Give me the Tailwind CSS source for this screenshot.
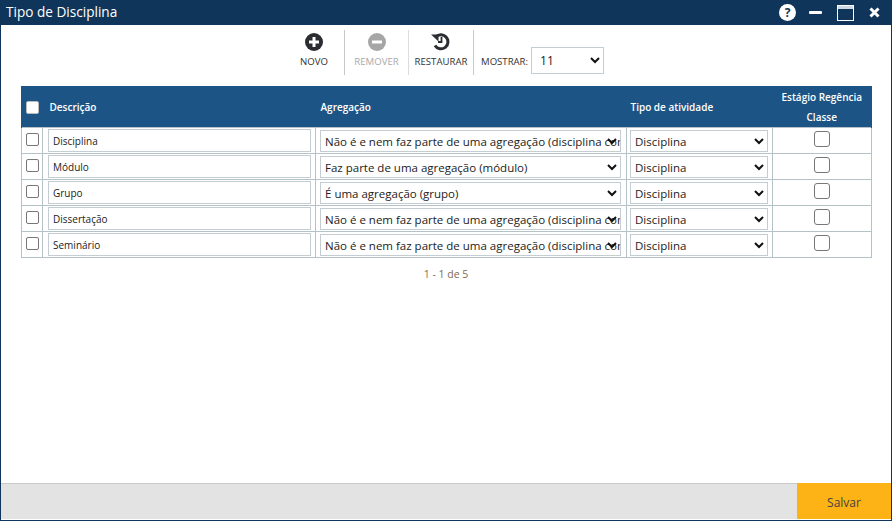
<!DOCTYPE html>
<html lang="pt">
<head>
    <meta charset="UTF-8">
    <title>Tipo de Disciplina</title>
    <script src="https://cdn.jsdelivr.net/npm/@tailwindcss/browser@4"></script>
</head>
<body class="bg-white font-['Open_Sans',sans-serif]">
    <div class="w-[892px] h-[521px] flex flex-col overflow-hidden border border-t-0 border-[#10355a]">
        <!-- title bar -->
        <div class="h-[25px] shrink-0 -mx-px bg-[#10355a] flex items-center pl-[6px] text-white">
            <span class="text-[13.6px] flex-1">Tipo de Disciplina</span>
            <svg class="w-[17px] h-[17px] mr-[13px]" viewBox="0 0 17 17"><circle cx="8.5" cy="8.5" r="8.5" fill="#fff"/><text x="8.5" y="13" text-anchor="middle" font-size="12" font-weight="700" font-family="Open Sans" fill="#10355a">?</text></svg>
            <div class="w-[13px] h-[3px] bg-white rounded-[1px] mr-[15px]"></div>
            <svg class="w-[17px] h-[16px] mr-[15px]" viewBox="0 0 17 16"><rect x=".5" y=".5" width="16" height="15" fill="none" stroke="#fff"/><rect x="1" y="1" width="15" height="3" fill="#cfd8e2"/></svg>
            <svg class="w-[11px] h-[11px] mr-[12px]" viewBox="0 0 11 11"><path d="M1.5 1.5l8 8M9.5 1.5l-8 8" stroke="#fff" stroke-width="3"/></svg>
        </div>

        <div class="flex-1 min-h-0 flex flex-col items-start">
            <!-- toolbar -->
            <div class="h-[61px] w-full shrink-0 flex justify-start pl-[285px] pt-[5px] text-[9.6px]">
                <div class="w-[59px] h-[45px] border-r border-[#c9c9c9] flex flex-col items-center text-[#333]">
                    <svg class="w-[18px] h-[18px] mt-[3px] -ml-[2px]" viewBox="0 0 18 18"><circle cx="9" cy="9" r="9" fill="#2b2d33"/><path d="M9 4v10M4 9h10" stroke="#fff" stroke-width="3"/></svg>
                    <span class="mt-[4px] -ml-[2px]">NOVO</span>
                </div>
                <div class="w-[64px] h-[45px] border-r border-[#dcdcdc] flex flex-col items-center text-[#a9a9a9]">
                    <svg class="w-[18px] h-[18px] mt-[3px]" viewBox="0 0 18 18"><circle cx="9" cy="9" r="9" fill="#a6a6a6"/><path d="M4 9h10" stroke="#fff" stroke-width="3"/></svg>
                    <span class="mt-[4px]">REMOVER</span>
                </div>
                <div class="w-[65px] h-[45px] border-r border-[#c9c9c9] flex flex-col items-center text-[#333]">
                    <svg class="w-[19px] h-[19px] mt-[2px] -ml-[2px]" viewBox="0 0 19 19"><path d="M4.5 5.5A7 7 0 1 1 4 13.5" fill="none" stroke="#2b2d33" stroke-width="3"/><path d="M0 2.5h7.5v7z" fill="#2b2d33"/><path d="M10.5 5v5H7" fill="none" stroke="#2b2d33" stroke-width="1.8"/></svg>
                    <span class="mt-[4px]">RESTAURAR</span>
                </div>
                <div class="flex items-start pl-[7px] text-[#333]">
                    <span class="mt-[25px]">MOSTRAR:</span>
                    <div class="relative ml-[3px] mt-[17px]">
                        <select class="appearance-none w-[73px] h-[27px] border border-[#c4cdd1] pl-[8px] text-[12px] text-[#222]"><option>11</option></select>
                        <svg class="absolute right-[4px] top-[10px] w-[10px] h-[7px]" viewBox="0 0 10 7"><path d="M1 1l4 4 4-4" fill="none" stroke="#111" stroke-width="2"/></svg>
                    </div>
                </div>
            </div>

            <!-- table -->
            <table class="ml-[20px] w-[850px] table-fixed border-collapse text-[#222]">
                <colgroup>
                    <col class="w-[21px]"><col class="w-[273px]"><col class="w-[311px]"><col class="w-[146px]"><col class="w-[99px]">
                </colgroup>
                <thead>
                    <tr class="h-[41px] bg-[#1d5486] text-white text-left">
                        <th class="border-l border-[#1d5486] pl-[4px] pt-[1px]"><span class="block w-[13px] h-[13px] bg-white border border-[#bbb] rounded-[2px]"></span></th>
                        <th class="pl-[7px] pt-[1px] font-semibold text-[10px]">Descrição</th>
                        <th class="pl-[5px] pt-[1px] font-semibold text-[10px]">Agregação</th>
                        <th class="pl-[4px] pt-[1px] font-semibold text-[10px]">Tipo de atividade</th>
                        <th class="border-r border-[#1d5486] pt-[1px] text-center font-semibold text-[10px] leading-[20px]">Estágio Regência<br>Classe</th>
                    </tr>
                </thead>
                <tbody>
                    <tr class="h-[26px]">
                        <td class="border border-[#b5c2c8] pl-[4px]"><span class="block w-[13px] h-[13px] border border-[#777] rounded-[2px] -mt-[2px]"></span></td>
                        <td class="border border-[#b5c2c8] px-[5px]"><input class="block w-[263px] h-[23px] border border-[#c4cdd1] pl-[4px] pt-[1px] text-[10px] text-[#222]" value="Disciplina"></td>
                        <td class="border border-[#b5c2c8] px-[4px]"><div class="relative w-[301px]"><select class="block appearance-none w-full h-[22px] border border-[#c4cdd1] pl-[4px] pt-[2px] text-[11.5px] text-[#222]"><option>Não é e nem faz parte de uma agregação (disciplina comum)</option></select><svg class="absolute right-[4px] top-[8px] w-[10px] h-[7px]" viewBox="0 0 10 7"><path d="M1 1l4 4 4-4" fill="none" stroke="#111" stroke-width="2"/></svg></div></td>
                        <td class="border border-[#b5c2c8] px-[3px]"><div class="relative w-[138px]"><select class="block appearance-none w-full h-[22px] border border-[#c4cdd1] pl-[4px] pt-[2px] text-[11.5px] text-[#222]"><option>Disciplina</option></select><svg class="absolute right-[4px] top-[8px] w-[10px] h-[7px]" viewBox="0 0 10 7"><path d="M1 1l4 4 4-4" fill="none" stroke="#111" stroke-width="2"/></svg></div></td>
                        <td class="border border-[#b5c2c8]"><span class="block mx-auto w-[16px] h-[16px] border border-[#777] rounded-[3px] -mt-[4px]"></span></td>
                    </tr>
                    <tr class="h-[26px]">
                        <td class="border border-[#b5c2c8] pl-[4px]"><span class="block w-[13px] h-[13px] border border-[#777] rounded-[2px] -mt-[2px]"></span></td>
                        <td class="border border-[#b5c2c8] px-[5px]"><input class="block w-[263px] h-[23px] border border-[#c4cdd1] pl-[4px] pt-[1px] text-[10px] text-[#222]" value="Módulo"></td>
                        <td class="border border-[#b5c2c8] px-[4px]"><div class="relative w-[301px]"><select class="block appearance-none w-full h-[22px] border border-[#c4cdd1] pl-[4px] pt-[2px] text-[11.5px] text-[#222]"><option>Faz parte de uma agregação (módulo)</option></select><svg class="absolute right-[4px] top-[8px] w-[10px] h-[7px]" viewBox="0 0 10 7"><path d="M1 1l4 4 4-4" fill="none" stroke="#111" stroke-width="2"/></svg></div></td>
                        <td class="border border-[#b5c2c8] px-[3px]"><div class="relative w-[138px]"><select class="block appearance-none w-full h-[22px] border border-[#c4cdd1] pl-[4px] pt-[2px] text-[11.5px] text-[#222]"><option>Disciplina</option></select><svg class="absolute right-[4px] top-[8px] w-[10px] h-[7px]" viewBox="0 0 10 7"><path d="M1 1l4 4 4-4" fill="none" stroke="#111" stroke-width="2"/></svg></div></td>
                        <td class="border border-[#b5c2c8]"><span class="block mx-auto w-[16px] h-[16px] border border-[#777] rounded-[3px] -mt-[4px]"></span></td>
                    </tr>
                    <tr class="h-[26px]">
                        <td class="border border-[#b5c2c8] pl-[4px]"><span class="block w-[13px] h-[13px] border border-[#777] rounded-[2px] -mt-[2px]"></span></td>
                        <td class="border border-[#b5c2c8] px-[5px]"><input class="block w-[263px] h-[23px] border border-[#c4cdd1] pl-[4px] pt-[1px] text-[10px] text-[#222]" value="Grupo"></td>
                        <td class="border border-[#b5c2c8] px-[4px]"><div class="relative w-[301px]"><select class="block appearance-none w-full h-[22px] border border-[#c4cdd1] pl-[4px] pt-[2px] text-[11.5px] text-[#222]"><option>É uma agregação (grupo)</option></select><svg class="absolute right-[4px] top-[8px] w-[10px] h-[7px]" viewBox="0 0 10 7"><path d="M1 1l4 4 4-4" fill="none" stroke="#111" stroke-width="2"/></svg></div></td>
                        <td class="border border-[#b5c2c8] px-[3px]"><div class="relative w-[138px]"><select class="block appearance-none w-full h-[22px] border border-[#c4cdd1] pl-[4px] pt-[2px] text-[11.5px] text-[#222]"><option>Disciplina</option></select><svg class="absolute right-[4px] top-[8px] w-[10px] h-[7px]" viewBox="0 0 10 7"><path d="M1 1l4 4 4-4" fill="none" stroke="#111" stroke-width="2"/></svg></div></td>
                        <td class="border border-[#b5c2c8]"><span class="block mx-auto w-[16px] h-[16px] border border-[#777] rounded-[3px] -mt-[4px]"></span></td>
                    </tr>
                    <tr class="h-[26px]">
                        <td class="border border-[#b5c2c8] pl-[4px]"><span class="block w-[13px] h-[13px] border border-[#777] rounded-[2px] -mt-[2px]"></span></td>
                        <td class="border border-[#b5c2c8] px-[5px]"><input class="block w-[263px] h-[23px] border border-[#c4cdd1] pl-[4px] pt-[1px] text-[10px] text-[#222]" value="Dissertação"></td>
                        <td class="border border-[#b5c2c8] px-[4px]"><div class="relative w-[301px]"><select class="block appearance-none w-full h-[22px] border border-[#c4cdd1] pl-[4px] pt-[2px] text-[11.5px] text-[#222]"><option>Não é e nem faz parte de uma agregação (disciplina comum)</option></select><svg class="absolute right-[4px] top-[8px] w-[10px] h-[7px]" viewBox="0 0 10 7"><path d="M1 1l4 4 4-4" fill="none" stroke="#111" stroke-width="2"/></svg></div></td>
                        <td class="border border-[#b5c2c8] px-[3px]"><div class="relative w-[138px]"><select class="block appearance-none w-full h-[22px] border border-[#c4cdd1] pl-[4px] pt-[2px] text-[11.5px] text-[#222]"><option>Disciplina</option></select><svg class="absolute right-[4px] top-[8px] w-[10px] h-[7px]" viewBox="0 0 10 7"><path d="M1 1l4 4 4-4" fill="none" stroke="#111" stroke-width="2"/></svg></div></td>
                        <td class="border border-[#b5c2c8]"><span class="block mx-auto w-[16px] h-[16px] border border-[#777] rounded-[3px] -mt-[4px]"></span></td>
                    </tr>
                    <tr class="h-[26px]">
                        <td class="border border-[#b5c2c8] pl-[4px]"><span class="block w-[13px] h-[13px] border border-[#777] rounded-[2px] -mt-[2px]"></span></td>
                        <td class="border border-[#b5c2c8] px-[5px]"><input class="block w-[263px] h-[23px] border border-[#c4cdd1] pl-[4px] pt-[1px] text-[10px] text-[#222]" value="Seminário"></td>
                        <td class="border border-[#b5c2c8] px-[4px]"><div class="relative w-[301px]"><select class="block appearance-none w-full h-[22px] border border-[#c4cdd1] pl-[4px] pt-[2px] text-[11.5px] text-[#222]"><option>Não é e nem faz parte de uma agregação (disciplina comum)</option></select><svg class="absolute right-[4px] top-[8px] w-[10px] h-[7px]" viewBox="0 0 10 7"><path d="M1 1l4 4 4-4" fill="none" stroke="#111" stroke-width="2"/></svg></div></td>
                        <td class="border border-[#b5c2c8] px-[3px]"><div class="relative w-[138px]"><select class="block appearance-none w-full h-[22px] border border-[#c4cdd1] pl-[4px] pt-[2px] text-[11.5px] text-[#222]"><option>Disciplina</option></select><svg class="absolute right-[4px] top-[8px] w-[10px] h-[7px]" viewBox="0 0 10 7"><path d="M1 1l4 4 4-4" fill="none" stroke="#111" stroke-width="2"/></svg></div></td>
                        <td class="border border-[#b5c2c8]"><span class="block mx-auto w-[16px] h-[16px] border border-[#777] rounded-[3px] -mt-[4px]"></span></td>
                    </tr>
                </tbody>
            </table>
            <div class="w-full pl-[20px] mt-[9px] text-center text-[10.5px] text-[#7d6a55]"><span class="block w-[850px]">1 - 1 de 5</span></div>
        </div>

        <!-- footer -->
        <div class="h-[36px] shrink-0 mb-px bg-[#e3e3e3] border-t border-[#c9c9c9] flex justify-end">
            <div class="w-[94px] -mt-px bg-[#fdb215] flex items-center justify-center pt-[4px] text-[12px] text-[#444]">Salvar</div>
        </div>
    </div>
</body>
</html>
